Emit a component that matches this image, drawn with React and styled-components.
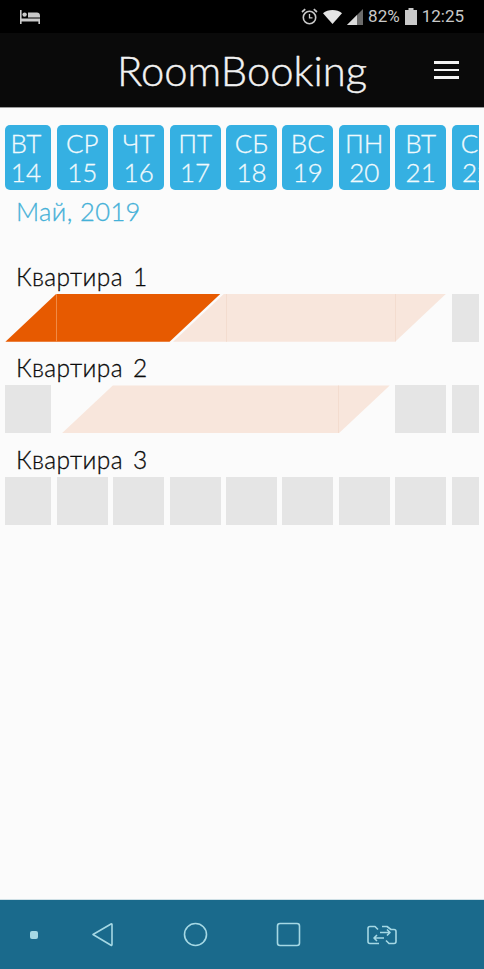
import React from "react"
import styled, { createGlobalStyle } from "styled-components"

const FONT = `Lato, "Noto Sans", "Liberation Sans", sans-serif`

const GlobalStyle = createGlobalStyle`
  html, body {
    margin: 0;
    padding: 0;
    background: #fbfbfb;
  }
  body {
    font-family: ${FONT};
  }
`

const Page = styled.div`
  width: 484px;
  height: 969px;
  display: flex;
  flex-direction: column;
  overflow: hidden;
`

const StatusBar = styled.div`
  height: 33px;
  flex: none;
  background: #000;
  display: flex;
  align-items: center;
  justify-content: space-between;
  padding: 0 20px;
  color: #c9c9c9;
`

const StatusGroup = styled.div`
  display: flex;
  align-items: center;
  gap: 5px;
`

const StatusText = styled.span`
  font-family: Roboto, "Liberation Sans", sans-serif;
  font-size: 17px;
  line-height: 33px;
`

const Header = styled.header`
  height: 75px;
  flex: none;
  box-sizing: border-box;
  background: #0a0a0a;
  border-bottom: 1px solid #9a9a9a;
  display: grid;
  grid-template-columns: 1fr auto 1fr;
  align-items: center;
  padding: 0 25px 0 0;
`

const Title = styled.h1`
  grid-column: 2;
  margin: 0 0 0 25px;
  font-size: 41.8px;
  font-weight: 300;
  -webkit-text-stroke: 0.4px #f2f2f2;
  line-height: 74px;
  color: #f2f2f2;
`

const MenuButton = styled.div`
  grid-column: 3;
  justify-self: end;
  width: 25px;
  display: flex;
  flex-direction: column;
  gap: 5px;
`

const MenuLine = styled.span`
  display: block;
  height: 2.5px;
  background: #f2f2f2;
`

const Main = styled.main`
  flex: 1;
  padding-top: 17px;
  background: #fbfbfb;
`

const Strip = styled.div`
  margin: 0 5px;
  overflow: hidden;
  border-radius: ${(p) => (p.$rounded ? "5px 0 0 5px" : "0")};
`

const Track = styled.div`
  display: grid;
  grid-template-columns: repeat(9, 51px);
  column-gap: 5.4px;
  margin-left: -4.6px;
  width: 600px;
`

const DayCell = styled.div`
  height: 65px;
  border-radius: 5px;
  background: #35b0e2;
  color: #f1fafd;
  font-size: 26px;
  font-weight: 300;
  -webkit-text-stroke: 0.3px #f1fafd;
  line-height: 29px;
  text-align: center;
  padding-top: 4px;
  box-sizing: border-box;
`

const MonthLabel = styled.div`
  margin: 6px 0 0 16px;
  height: 54px;
  font-size: 25.5px;
  font-weight: 300;
  -webkit-text-stroke: 0.3px #45b1d8;
  letter-spacing: 0.4px;
  line-height: 30px;
  color: #45b1d8;
`

const RoomLabel = styled.div`
  margin: 0 0 0 16px;
  height: 43.7px;
  display: flex;
  align-items: flex-end;
  font-size: 24.5px;
  font-weight: 300;
  -webkit-text-stroke: 0.3px #0a0a0a;
  letter-spacing: 0.4px;
  word-spacing: 3px;
  line-height: 34px;
  color: #0a0a0a;
`

const RoomTrack = styled(Track)`
  grid-auto-rows: 48px;
`

const FreeCell = styled.div`
  grid-row: 1;
  grid-column: ${(p) => p.$col};
  background: #e5e5e5;
`

const Booking = styled.div`
  grid-row: 1;
  grid-column: ${(p) => p.$start} / span ${(p) => p.$span};
  background-color: ${(p) => (p.$paid ? "#e75a00" : "#f8e6dc")};
  clip-path: polygon(${(p) => p.$inset}px 100%, ${(p) => p.$inset + 51}px 0, 100% 0, calc(100% - 51px) 100%);
`

const NavBar = styled.nav`
  height: 70px;
  flex: none;
  background: #1a6a8c;
  border-top: 1px solid #cfe0e6;
  box-sizing: border-box;
  display: flex;
  align-items: center;
  padding: 0 0 0 30px;
  color: #a5d8e4;
`

const NavDot = styled.span`
  width: 8px;
  height: 8px;
  border-radius: 2px;
  background: #a5d8e4;
  margin-right: 53px;
`

const NavIcon = styled.svg`
  display: block;
  flex: none;
  margin-right: ${(p) => p.$gap}px;
`

const DAYS = [
  ["ВТ", 14], ["СР", 15], ["ЧТ", 16], ["ПТ", 17], ["СБ", 18],
  ["ВС", 19], ["ПН", 20], ["ВТ", 21], ["СР", 22]
]

const ROOMS = [
  {
    name: "Квартира 1",
    free: [9],
    bookings: [
      { start: 1, span: 4, paid: true, inset: 5, seams: [56] },
      { start: 4, span: 5, inset: 3.5, seams: [56, 225] }
    ]
  },
  {
    name: "Квартира 2",
    free: [1, 8, 9],
    bookings: [{ start: 2, span: 6, inset: 5, seams: [281] }]
  },
  {
    name: "Квартира 3",
    free: [1, 2, 3, 4, 5, 6, 7, 8, 9],
    bookings: []
  }
]

// the hair-thin joins between the days of a booking
const seamImage = (seams, paid) => {
  const color = paid ? "#f08a45" : "#f3dccf"
  return seams
    .map((x) => `linear-gradient(to right, transparent ${x}px, ${color} ${x}px, ${color} ${x + 1}px, transparent ${x + 1}px)`)
    .join(", ")
}

const BedIcon = () => (
  <svg width="20" height="14" viewBox="0 0 20 14" fill="#c9c9c9">
    <path d="M0 0h1.6v8.4H20V14h-1.6v-2.4H1.6V14H0z" />
    <circle cx="4.6" cy="4.6" r="2.2" />
    <path d="M8 2.4h9c1.6 0 3 1.2 3 3v2.2H8z" />
  </svg>
)

const AlarmIcon = () => (
  <svg width="17" height="17" viewBox="0 0 17 17" fill="none" stroke="#c9c9c9">
    <circle cx="8.5" cy="9.5" r="6.2" strokeWidth="1.6" />
    <path d="M8.5 6v3.8h3" strokeWidth="1.3" />
    <path d="M1 4l3.2-2.8M16 4l-3.2-2.8" strokeWidth="1.7" />
  </svg>
)

const WifiIcon = () => (
  <svg width="19" height="14" viewBox="0 0 19 14">
    <path d="M0 3.2C5-1 14-1 19 3.2L9.500 14z" fill="#e4e4e4" />
  </svg>
)

const SignalIcon = () => (
  <svg width="16" height="16" viewBox="0 0 16 16">
    <path d="M0 16L16 0v16z" fill="#6c6c6c" />
    <path d="M0 16L10 6v10z" fill="#dcdcdc" />
  </svg>
)

const BatteryIcon = () => (
  <svg width="12" height="17" viewBox="0 0 12 17" fill="#c9c9c9">
    <path d="M3.500 0h5v2H12v15H0V2h3.500z" />
  </svg>
)

const App = () => (
  <Page>
    <GlobalStyle />
    <StatusBar>
      <BedIcon />
      <StatusGroup>
        <AlarmIcon />
        <WifiIcon />
        <SignalIcon />
        <StatusText>82%</StatusText>
        <BatteryIcon />
        <StatusText>12:25</StatusText>
      </StatusGroup>
    </StatusBar>
    <Header>
      <Title>RoomBooking</Title>
      <MenuButton>
        <MenuLine />
        <MenuLine />
        <MenuLine />
      </MenuButton>
    </Header>
    <Main>
      <Strip $rounded>
        <Track>
          {DAYS.map(([day, date], i) => (
            <DayCell key={`day-${i}`}>
              {day}
              <br />
              {date}
            </DayCell>
          ))}
        </Track>
      </Strip>
      <MonthLabel>Май, 2019</MonthLabel>
      {ROOMS.map((room) => (
        <section key={room.name}>
          <RoomLabel>{room.name}</RoomLabel>
          <Strip>
            <RoomTrack>
              {room.free.map((col) => (
                <FreeCell key={`free-${col}`} $col={col} />
              ))}
              {room.bookings.map((b) => (
                <Booking
                  key={`booking-${b.start}`}
                  $start={b.start}
                  $span={b.span}
                  $paid={b.paid}
                  $inset={b.inset}
                  style={{ backgroundImage: seamImage(b.seams, b.paid) }}
                />
              ))}
            </RoomTrack>
          </Strip>
        </section>
      ))}
    </Main>
    <NavBar>
      <NavDot />
      <NavIcon $gap={69} width="23" height="25" viewBox="0 0 23 25" fill="none" stroke="#a5d8e4" strokeWidth="1.6" strokeLinejoin="round">
        <path d="M2 12.500L20 2c.6-.3 1 0 1 .6v20c0 .6-.4.9-1 .6z" />
      </NavIcon>
      <NavIcon $gap={68} width="25" height="25" viewBox="0 0 25 25" fill="none" stroke="#a5d8e4" strokeWidth="1.6">
        <circle cx="12.500" cy="12.500" r="11" />
      </NavIcon>
      <NavIcon $gap={66} width="25" height="25" viewBox="0 0 25 25" fill="none" stroke="#a5d8e4" strokeWidth="1.6">
        <rect x="1.500" y="1.500" width="22" height="22" rx="2.500" />
      </NavIcon>
      <NavIcon $gap={0} width="30" height="20" viewBox="0 0 30 20" fill="none" stroke="#a5d8e4" strokeWidth="1.6" strokeLinejoin="round">
        <path d="M11 4.500L8 1.500H3C1.800 1.500 1 2.300 1 3.500v13c0 1.200.8 2 2 2h9" />
        <path d="M19 15.500l3 3h5c1.200 0 2-.8 2-2v-10c0-1.200-.8-2-2-2h-3L20 1.500h-5" />
        <path d="M13 7.500h10M20 4.500l3 3-3 3" />
        <path d="M17 13H7M10 10l-3 3 3 3" />
      </NavIcon>
    </NavBar>
  </Page>
)

export default App
